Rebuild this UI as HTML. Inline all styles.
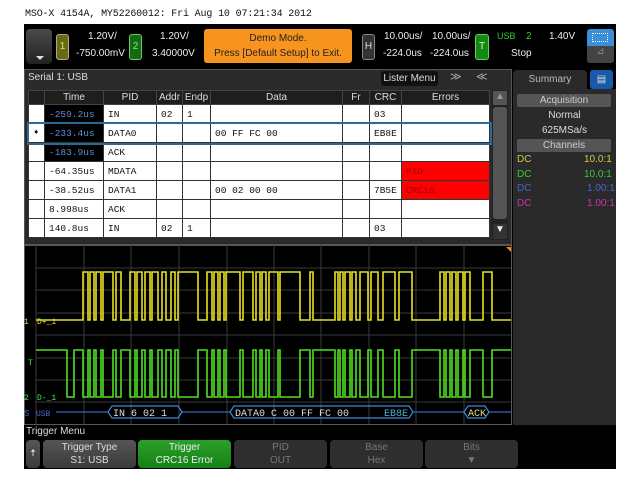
<!DOCTYPE html>
<html><head><meta charset="utf-8"><style>
*{margin:0;padding:0;box-sizing:border-box}
body{width:640px;height:480px;background:#fff;position:relative;overflow:hidden;font-family:"Liberation Sans",sans-serif;font-size:10px}
.a{position:absolute}
.mono{font-family:"Liberation Mono",monospace}
.w{color:#eee}
td{border:1px solid #333;height:19px;padding:0 0 0 4px;font-family:"Liberation Mono",monospace;font-size:9.5px;color:#111;background:#fff}
th{background:#1e1e1e;color:#ddd;font-weight:normal;font-size:10px;height:14px;border:1px solid #444}
table{border-collapse:collapse;position:absolute;left:28px;top:90px;table-layout:fixed}
.btn{position:absolute;top:440px;height:28px;border-radius:4px;background:linear-gradient(#555,#3a3a3a);color:#ddd;text-align:center;font-size:10px;line-height:13px;padding-top:1px}
</style></head><body>
<div class="a mono" style="left:25px;top:9px;font-size:10px;letter-spacing:-0.15px;color:#111">MSO-X 4154A, MY52260012: Fri Aug 10 07:21:34 2012</div>
<!-- top bar -->
<div class="a" style="left:24px;top:24px;width:592px;height:45px;background:#000"></div>
<div class="a" style="left:26px;top:29px;width:26px;height:35px;border-radius:4px;background:linear-gradient(#4a4a4a,#222)"></div>
<div class="a" style="left:36px;top:56px;width:0;height:0;border-left:4px solid transparent;border-right:4px solid transparent;border-top:4px solid #ddd"></div>
<div class="a" style="left:56px;top:34px;width:13px;height:26px;border:1px solid #aa9;border-radius:3px;background:#6a6a10;color:#dd8;text-align:center;line-height:24px">1</div>
<div class="a w" style="left:88px;top:31px">1.20V/</div>
<div class="a w" style="left:76px;top:48px">-750.00mV</div>
<div class="a" style="left:129px;top:34px;width:13px;height:26px;border:1px solid #6c6;border-radius:3px;background:#126a12;color:#8e8;text-align:center;line-height:24px">2</div>
<div class="a w" style="left:160px;top:31px">1.20V/</div>
<div class="a w" style="left:152px;top:48px">3.40000V</div>
<div class="a" style="left:204px;top:29px;width:148px;height:34px;border-radius:3px;background:#f7941d;color:#222;text-align:center;line-height:15px;padding-top:2px">Demo Mode.<br>Press [Default Setup] to Exit.</div>
<div class="a" style="left:362px;top:34px;width:13px;height:26px;border:1px solid #888;border-radius:3px;background:#333;color:#ddd;text-align:center;line-height:24px">H</div>
<div class="a w" style="left:384px;top:31px">10.00us/</div>
<div class="a w" style="left:383px;top:48px">-224.0us</div>
<div class="a w" style="left:432px;top:31px">10.00us/</div>
<div class="a w" style="left:430px;top:48px">-224.0us</div>
<div class="a" style="left:475px;top:34px;width:14px;height:26px;border:1px solid #6c6;border-radius:3px;background:#128a12;color:#cfc;text-align:center;line-height:24px">T</div>
<div class="a" style="left:497px;top:31px;color:#3c3;font-size:9px">USB</div>
<div class="a" style="left:526px;top:31px;color:#3c3">2</div>
<div class="a w" style="left:549px;top:31px">1.40V</div>
<div class="a w" style="left:511px;top:48px">Stop</div>
<div class="a" style="left:587px;top:29px;width:27px;height:17px;border-radius:3px 3px 0 0;background:#3a8fd8"><div class="a" style="left:5px;top:4px;width:16px;height:9px;border:1px dotted #fff"></div></div>
<div class="a" style="left:587px;top:46px;width:27px;height:17px;border-radius:0 0 3px 3px;background:#444;color:#888;text-align:center">⊿</div>
<!-- panels -->
<div class="a" style="left:24px;top:69px;width:592px;height:400px;background:#000"></div>
<div class="a" style="left:24px;top:69px;width:488px;height:176px;background:#2a2a2a;border:1px solid #555"></div>
<div class="a" style="left:28px;top:72px;color:#ddd">Serial 1: USB</div>
<div class="a" style="left:381px;top:71px;width:57px;height:15px;background:#111;border-radius:3px;color:#ddd;text-align:center;line-height:15px">Lister Menu</div>
<div class="a" style="left:450px;top:70px;color:#aaa;font-size:11px">≫</div>
<div class="a" style="left:476px;top:70px;color:#aaa;font-size:11px">≪</div>
<table>
<colgroup><col style="width:16px"><col style="width:59px"><col style="width:53px"><col style="width:26px"><col style="width:28px"><col style="width:132px"><col style="width:27px"><col style="width:32px"><col style="width:88px"></colgroup>
<tr><th></th><th>Time</th><th>PID</th><th>Addr</th><th>Endp</th><th>Data</th><th>Fr</th><th>CRC</th><th>Errors</th></tr>
<tr><td></td><td style="background:#000;color:#5a8fd8">-259.2us</td><td>IN</td><td>02</td><td>1</td><td></td><td></td><td>03</td><td></td></tr>
<tr style="outline:2px solid #2a6a9a"><td style="font-size:11px">➧</td><td style="background:#000;color:#5a8fd8">-233.4us</td><td>DATA0</td><td></td><td></td><td>00 FF FC 00</td><td></td><td>EB8E</td><td></td></tr>
<tr><td></td><td style="background:#000;color:#5a8fd8">-183.9us</td><td>ACK</td><td></td><td></td><td></td><td></td><td></td><td></td></tr>
<tr><td></td><td>-64.35us</td><td>MDATA</td><td></td><td></td><td></td><td></td><td></td><td style="background:#f00;color:#900">PID</td></tr>
<tr><td></td><td>-38.52us</td><td>DATA1</td><td></td><td></td><td>00 02 00 00</td><td></td><td>7B5E</td><td style="background:#f00;color:#900">CRC16</td></tr>
<tr><td></td><td>8.998us</td><td>ACK</td><td></td><td></td><td></td><td></td><td></td><td></td></tr>
<tr><td></td><td>140.8us</td><td>IN</td><td>02</td><td>1</td><td></td><td></td><td>03</td><td></td></tr>
</table>
<div class="a" style="left:492px;top:90px;width:16px;height:150px;background:#222"></div>
<div class="a" style="left:493px;top:91px;width:14px;height:14px;background:#555;color:#999;text-align:center;font-size:10px">▲</div>
<div class="a" style="left:493px;top:107px;width:14px;height:112px;background:#555;border-radius:3px"></div>
<div class="a" style="left:493px;top:224px;width:14px;height:15px;background:#333;color:#eee;text-align:center;font-size:10px">▼</div>
<!-- right panel -->
<div class="a" style="left:513px;top:89px;width:103px;height:336px;background:#2a2a2a"></div>
<div class="a" style="left:513px;top:70px;width:74px;height:20px;background:#2a2a2a;border-radius:4px 4px 0 0;color:#bbb;text-align:center;line-height:20px">Summary</div>
<div class="a" style="left:590px;top:70px;width:23px;height:19px;background:#1a5aaa;border-radius:3px;color:#ddd;text-align:center;line-height:19px">▤</div>
<div class="a" style="left:517px;top:94px;width:94px;height:13px;background:#555;border-radius:2px;color:#ccc;text-align:center;line-height:13px">Acquisition</div>
<div class="a" style="left:513px;top:110px;width:103px;color:#ddd;text-align:center">Normal</div>
<div class="a" style="left:513px;top:125px;width:103px;color:#ddd;text-align:center">625MSa/s</div>
<div class="a" style="left:517px;top:139px;width:94px;height:13px;background:#555;border-radius:2px;color:#ccc;text-align:center;line-height:13px">Channels</div>
<div class="a" style="left:517px;top:154px;color:#cc4">DC</div><div class="a" style="left:584px;top:154px;color:#cc4">10.0:1</div>
<div class="a" style="left:517px;top:169px;color:#3c3">DC</div><div class="a" style="left:584px;top:169px;color:#3c3">10.0:1</div>
<div class="a" style="left:517px;top:183px;color:#46c">DC</div><div class="a" style="left:587px;top:183px;color:#46c">1.00:1</div>
<div class="a" style="left:517px;top:198px;color:#c3a">DC</div><div class="a" style="left:587px;top:198px;color:#c3a">1.00:1</div>
<!-- waveform -->
<svg class="a" style="left:24px;top:245px" width="488" height="180" viewBox="24 245 488 180">
<rect x="24" y="245" width="488" height="180" fill="#000" stroke="#777" stroke-width="1.5"/>
<g stroke="#3a3a3a" stroke-width="1">
<path d="M36 245V424M84 245V424M131 245V424M179 245V424M227 245V424M274 245V424M321 245V424M369 245V424M416 245V424M464 245V424"/>
<path d="M36 268H511M36 290H511M36 313H511M36 335H511M36 358H511M36 380H511M36 402H511"/>
</g>
<path fill="none" stroke="#e8e020" stroke-width="1.6" d="M36 320 H83 V272 H88 V320 H90 V272 H94 V320 H96 V272 H101 V320 H103 V272 H113 V320 H116 V272 H121 V320 H130 V272 H135 V320 H137 V272 H142 V320 H145 V272 H150 V320 H152 V272 H158 V320 H162 V272 H166 V320 H171 V272 H175 V320 H178 V272 H198 V320 H207 V272 H212 V320 H214 V272 H218 V320 H220 V272 H224 V320 H226 V272 H240 V320 H243 V272 H253 V320 H256 V272 H260 V320 H262 V272 H266 V320 H269 V272 H278 V320 H280 V272 H300 V320 H310 V272 H313 V320 H335 V272 H338 V320 H340 V272 H343 V320 H345 V272 H350 V320 H352 V272 H356 V320 H360 V272 H368 V320 H371 V272 H378 V320 H383 V272 H395 V320 H399 V272 H412 V320 H440 V272 H444 V320 H446 V272 H450 V320 H452 V272 H456 V320 H458 V272 H463 V320 H465 V272 H470 V320 H483 V272 H492 V320 H511"/>
<path fill="none" stroke="#4ee020" stroke-width="1.6" d="M36 350 H67 V397 H74 V350 H83 V397 H88 V350 H90 V397 H94 V350 H96 V397 H101 V350 H103 V397 H113 V350 H116 V397 H121 V350 H130 V397 H135 V350 H137 V397 H142 V350 H145 V397 H150 V350 H152 V397 H158 V350 H162 V397 H166 V350 H171 V397 H175 V350 H178 V397 H198 V350 H207 V397 H212 V350 H214 V397 H218 V350 H220 V397 H224 V350 H226 V397 H240 V350 H243 V397 H253 V350 H256 V397 H260 V350 H262 V397 H266 V350 H269 V397 H278 V350 H280 V397 H300 V350 H310 V397 H313 V350 H335 V397 H338 V350 H340 V397 H343 V350 H345 V397 H350 V350 H352 V397 H356 V350 H360 V397 H368 V350 H371 V397 H378 V350 H383 V397 H395 V350 H399 V397 H412 V350 H440 V397 H444 V350 H446 V397 H450 V350 H452 V397 H456 V350 H458 V397 H463 V350 H465 V397 H470 V350 H483 V397 H492 V350 H511"/>
<path fill="none" stroke="#2a6ac0" stroke-width="1.2" d="M56 412H108M182 412H230M413 412H464M489 412H511"/>
<path fill="none" stroke="#3a8ae0" stroke-width="1.2" d="M112 406H178L182 412L178 418H112L108 412Z M234 406H409L413 412L409 418H234L230 412Z M468 406H485L489 412L485 418H468L464 412Z"/>
<g font-family="Liberation Mono,monospace" font-size="10">
<text x="113" y="416" fill="#ddd">IN 6 02 1</text>
<text x="235" y="416" fill="#ddd">DATA0 C 00 FF FC 00</text>
<text x="384" y="416" fill="#4ab0d0">EB8E</text>
<text x="468" y="416" fill="#dd8">ACK</text>
<text x="37" y="324" fill="#dd4" font-size="8">D+_1</text>
<text x="37" y="400" fill="#4e4" font-size="8">D-_1</text>
<text x="36" y="416" fill="#46c" font-size="8">USB</text>
<text x="24" y="324" fill="#dd4" font-size="8">1</text>
<text x="24" y="400" fill="#4e4" font-size="8">2</text>
<text x="24" y="416" fill="#46c" font-size="9">S</text>
<text x="28" y="365" fill="#4e4" font-size="8">T</text>
</g>
<path d="M506 247H511V252Z" fill="#f80"/>
</svg>
<!-- trigger menu -->
<div class="a" style="left:26px;top:426px;color:#ddd">Trigger Menu</div>
<div class="btn" style="left:26px;width:14px;padding-top:7px">🠅</div>
<div class="btn" style="left:43px;width:93px">Trigger Type<br>S1: USB</div>
<div class="btn" style="left:138px;width:93px;background:linear-gradient(#2aa02a,#168016);color:#eee">Trigger<br>CRC16 Error</div>
<div class="btn" style="left:234px;width:93px;background:#2e2e2e;color:#777">PID<br>OUT</div>
<div class="btn" style="left:330px;width:93px;background:#2e2e2e;color:#777">Base<br>Hex</div>
<div class="btn" style="left:425px;width:93px;background:#2e2e2e;color:#777">Bits<br>▼</div>
</body></html>
